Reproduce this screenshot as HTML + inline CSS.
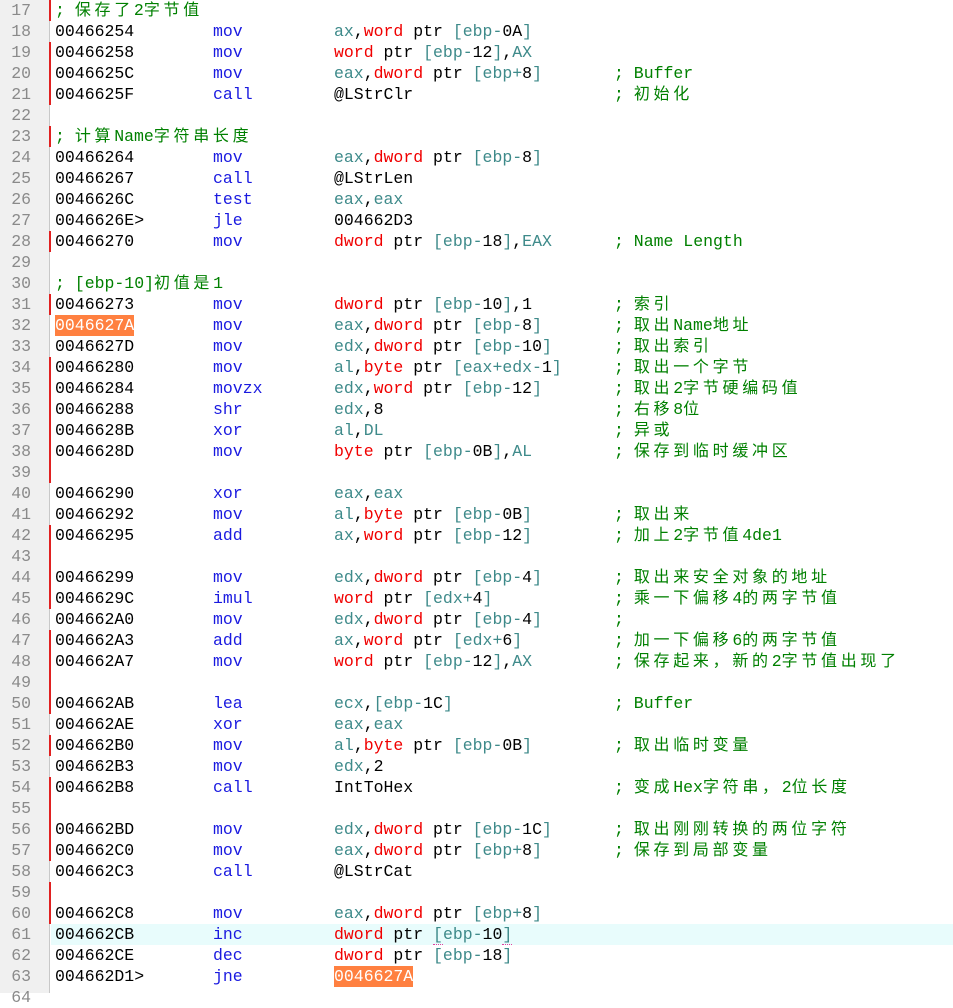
<!DOCTYPE html>
<html><head><meta charset="utf-8"><style>
body{margin:0;width:953px;height:993px;overflow:hidden;background:#fff;position:relative;font-family:"Liberation Mono","Noto Sans CJK SC",monospace;font-size:16.5px;}
#g{position:absolute;left:0;top:0;width:49px;height:993px;background:#f0f0f0;}
#gl{position:absolute;left:49px;top:0;width:1px;height:993px;background:#c8c8c8;}
.l{position:absolute;left:0;height:21px;width:953px;line-height:21px;white-space:pre;color:#000;overflow:hidden;}
.l>span{height:21px;top:0;}
.n{position:absolute;left:0;width:31px;text-align:right;color:#8a8a8a;}
.mk{position:absolute;left:49px;top:0;width:2px;height:21px;background:#e02020;}
.a{position:absolute;left:55px;}
.m{position:absolute;left:213px;color:#1a1ae0;}
.o{position:absolute;left:334px;}
.c{position:absolute;left:614px;color:#008000;}
.cc{position:absolute;left:55px;color:#008000;}
.r{color:#3e8a8a;}
.k{color:#f00000;}
i{font-style:normal;font-family:"Noto Sans CJK SC",sans-serif;font-size:16px;letter-spacing:3.7px;line-height:1;vertical-align:0;}
.hl{background:#ff8040;color:#fff;}
</style></head><body>
<div id="g"></div><div id="gl"></div>

<div class="l" style="top:0px"><span class="n">17</span><span class="mk"></span><span class="cc">; <i>保存了</i>2<i>字节值</i></span></div>
<div class="l" style="top:21px"><span class="n">18</span><span class="a">00466254</span><span class="m">mov</span><span class="o"><span class="r">ax</span>,<span class="k">word</span> ptr <span class="r">[ebp-</span>0A<span class="r">]</span></span></div>
<div class="l" style="top:42px"><span class="n">19</span><span class="mk"></span><span class="a">00466258</span><span class="m">mov</span><span class="o"><span class="k">word</span> ptr <span class="r">[ebp-</span>12<span class="r">]</span>,<span class="r">AX</span></span></div>
<div class="l" style="top:63px"><span class="n">20</span><span class="mk"></span><span class="a">0046625C</span><span class="m">mov</span><span class="o"><span class="r">eax</span>,<span class="k">dword</span> ptr <span class="r">[ebp+</span>8<span class="r">]</span></span><span class="c">; Buffer</span></div>
<div class="l" style="top:84px"><span class="n">21</span><span class="mk"></span><span class="a">0046625F</span><span class="m">call</span><span class="o">@LStrClr</span><span class="c">; <i>初始化</i></span></div>
<div class="l" style="top:105px"><span class="n">22</span></div>
<div class="l" style="top:126px"><span class="n">23</span><span class="mk"></span><span class="cc">; <i>计算</i>Name<i>字符串长度</i></span></div>
<div class="l" style="top:147px"><span class="n">24</span><span class="a">00466264</span><span class="m">mov</span><span class="o"><span class="r">eax</span>,<span class="k">dword</span> ptr <span class="r">[ebp-</span>8<span class="r">]</span></span></div>
<div class="l" style="top:168px"><span class="n">25</span><span class="a">00466267</span><span class="m">call</span><span class="o">@LStrLen</span></div>
<div class="l" style="top:189px"><span class="n">26</span><span class="a">0046626C</span><span class="m">test</span><span class="o"><span class="r">eax</span>,<span class="r">eax</span></span></div>
<div class="l" style="top:210px"><span class="n">27</span><span class="a">0046626E&gt;</span><span class="m">jle</span><span class="o">004662D3</span></div>
<div class="l" style="top:231px"><span class="n">28</span><span class="mk"></span><span class="a">00466270</span><span class="m">mov</span><span class="o"><span class="k">dword</span> ptr <span class="r">[ebp-</span>18<span class="r">]</span>,<span class="r">EAX</span></span><span class="c">; Name Length</span></div>
<div class="l" style="top:252px"><span class="n">29</span></div>
<div class="l" style="top:273px"><span class="n">30</span><span class="cc">; [ebp-10]<i>初值是</i>1</span></div>
<div class="l" style="top:294px"><span class="n">31</span><span class="mk"></span><span class="a">00466273</span><span class="m">mov</span><span class="o"><span class="k">dword</span> ptr <span class="r">[ebp-</span>10<span class="r">]</span>,1</span><span class="c">; <i>索引</i></span></div>
<div class="l" style="top:315px"><span class="n">32</span><span class="a hl">0046627A</span><span class="m">mov</span><span class="o"><span class="r">eax</span>,<span class="k">dword</span> ptr <span class="r">[ebp-</span>8<span class="r">]</span></span><span class="c">; <i>取出</i>Name<i>地址</i></span></div>
<div class="l" style="top:336px"><span class="n">33</span><span class="a">0046627D</span><span class="m">mov</span><span class="o"><span class="r">edx</span>,<span class="k">dword</span> ptr <span class="r">[ebp-</span>10<span class="r">]</span></span><span class="c">; <i>取出索引</i></span></div>
<div class="l" style="top:357px"><span class="n">34</span><span class="mk"></span><span class="a">00466280</span><span class="m">mov</span><span class="o"><span class="r">al</span>,<span class="k">byte</span> ptr <span class="r">[eax+edx-</span>1<span class="r">]</span></span><span class="c">; <i>取出一个字节</i></span></div>
<div class="l" style="top:378px"><span class="n">35</span><span class="mk"></span><span class="a">00466284</span><span class="m">movzx</span><span class="o"><span class="r">edx</span>,<span class="k">word</span> ptr <span class="r">[ebp-</span>12<span class="r">]</span></span><span class="c">; <i>取出</i>2<i>字节硬编码值</i></span></div>
<div class="l" style="top:399px"><span class="n">36</span><span class="mk"></span><span class="a">00466288</span><span class="m">shr</span><span class="o"><span class="r">edx</span>,8</span><span class="c">; <i>右移</i>8<i>位</i></span></div>
<div class="l" style="top:420px"><span class="n">37</span><span class="mk"></span><span class="a">0046628B</span><span class="m">xor</span><span class="o"><span class="r">al</span>,<span class="r">DL</span></span><span class="c">; <i>异或</i></span></div>
<div class="l" style="top:441px"><span class="n">38</span><span class="mk"></span><span class="a">0046628D</span><span class="m">mov</span><span class="o"><span class="k">byte</span> ptr <span class="r">[ebp-</span>0B<span class="r">]</span>,<span class="r">AL</span></span><span class="c">; <i>保存到临时缓冲区</i></span></div>
<div class="l" style="top:462px"><span class="n">39</span><span class="mk"></span></div>
<div class="l" style="top:483px"><span class="n">40</span><span class="a">00466290</span><span class="m">xor</span><span class="o"><span class="r">eax</span>,<span class="r">eax</span></span></div>
<div class="l" style="top:504px"><span class="n">41</span><span class="a">00466292</span><span class="m">mov</span><span class="o"><span class="r">al</span>,<span class="k">byte</span> ptr <span class="r">[ebp-</span>0B<span class="r">]</span></span><span class="c">; <i>取出来</i></span></div>
<div class="l" style="top:525px"><span class="n">42</span><span class="mk"></span><span class="a">00466295</span><span class="m">add</span><span class="o"><span class="r">ax</span>,<span class="k">word</span> ptr <span class="r">[ebp-</span>12<span class="r">]</span></span><span class="c">; <i>加上</i>2<i>字节值</i>4de1</span></div>
<div class="l" style="top:546px"><span class="n">43</span><span class="mk"></span></div>
<div class="l" style="top:567px"><span class="n">44</span><span class="mk"></span><span class="a">00466299</span><span class="m">mov</span><span class="o"><span class="r">edx</span>,<span class="k">dword</span> ptr <span class="r">[ebp-</span>4<span class="r">]</span></span><span class="c">; <i>取出来安全对象的地址</i></span></div>
<div class="l" style="top:588px"><span class="n">45</span><span class="mk"></span><span class="a">0046629C</span><span class="m">imul</span><span class="o"><span class="k">word</span> ptr <span class="r">[edx+</span>4<span class="r">]</span></span><span class="c">; <i>乘一下偏移</i>4<i>的两字节值</i></span></div>
<div class="l" style="top:609px"><span class="n">46</span><span class="a">004662A0</span><span class="m">mov</span><span class="o"><span class="r">edx</span>,<span class="k">dword</span> ptr <span class="r">[ebp-</span>4<span class="r">]</span></span><span class="c">;</span></div>
<div class="l" style="top:630px"><span class="n">47</span><span class="mk"></span><span class="a">004662A3</span><span class="m">add</span><span class="o"><span class="r">ax</span>,<span class="k">word</span> ptr <span class="r">[edx+</span>6<span class="r">]</span></span><span class="c">; <i>加一下偏移</i>6<i>的两字节值</i></span></div>
<div class="l" style="top:651px"><span class="n">48</span><span class="mk"></span><span class="a">004662A7</span><span class="m">mov</span><span class="o"><span class="k">word</span> ptr <span class="r">[ebp-</span>12<span class="r">]</span>,<span class="r">AX</span></span><span class="c">; <i>保存起来，新的</i>2<i>字节值出现了</i></span></div>
<div class="l" style="top:672px"><span class="n">49</span><span class="mk"></span></div>
<div class="l" style="top:693px"><span class="n">50</span><span class="mk"></span><span class="a">004662AB</span><span class="m">lea</span><span class="o"><span class="r">ecx</span>,<span class="r">[ebp-</span>1C<span class="r">]</span></span><span class="c">; Buffer</span></div>
<div class="l" style="top:714px"><span class="n">51</span><span class="a">004662AE</span><span class="m">xor</span><span class="o"><span class="r">eax</span>,<span class="r">eax</span></span></div>
<div class="l" style="top:735px"><span class="n">52</span><span class="mk"></span><span class="a">004662B0</span><span class="m">mov</span><span class="o"><span class="r">al</span>,<span class="k">byte</span> ptr <span class="r">[ebp-</span>0B<span class="r">]</span></span><span class="c">; <i>取出临时变量</i></span></div>
<div class="l" style="top:756px"><span class="n">53</span><span class="a">004662B3</span><span class="m">mov</span><span class="o"><span class="r">edx</span>,2</span></div>
<div class="l" style="top:777px"><span class="n">54</span><span class="mk"></span><span class="a">004662B8</span><span class="m">call</span><span class="o">IntToHex</span><span class="c">; <i>变成</i>Hex<i>字符串，</i>2<i>位长度</i></span></div>
<div class="l" style="top:798px"><span class="n">55</span><span class="mk"></span></div>
<div class="l" style="top:819px"><span class="n">56</span><span class="mk"></span><span class="a">004662BD</span><span class="m">mov</span><span class="o"><span class="r">edx</span>,<span class="k">dword</span> ptr <span class="r">[ebp-</span>1C<span class="r">]</span></span><span class="c">; <i>取出刚刚转换的两位字符</i></span></div>
<div class="l" style="top:840px"><span class="n">57</span><span class="mk"></span><span class="a">004662C0</span><span class="m">mov</span><span class="o"><span class="r">eax</span>,<span class="k">dword</span> ptr <span class="r">[ebp+</span>8<span class="r">]</span></span><span class="c">; <i>保存到局部变量</i></span></div>
<div class="l" style="top:861px"><span class="n">58</span><span class="a">004662C3</span><span class="m">call</span><span class="o">@LStrCat</span></div>
<div class="l" style="top:882px"><span class="n">59</span><span class="mk"></span></div>
<div class="l" style="top:903px"><span class="n">60</span><span class="mk"></span><span class="a">004662C8</span><span class="m">mov</span><span class="o"><span class="r">eax</span>,<span class="k">dword</span> ptr <span class="r">[ebp+</span>8<span class="r">]</span></span></div>
<div class="l" style="top:924px"><span style="position:absolute;left:51px;top:0;width:902px;height:21px;background:#e8fcfc"></span><span class="n">61</span><span class="a">004662CB</span><span class="m">inc</span><span class="o"><span class="k">dword</span> ptr <span class="r" style="border-bottom:1px dotted #e040a0">[</span><span class="r">ebp-</span>10<span class="r" style="border-bottom:1px dotted #e040a0">]</span></span></div>
<div class="l" style="top:945px"><span class="n">62</span><span class="a">004662CE</span><span class="m">dec</span><span class="o"><span class="k">dword</span> ptr <span class="r">[ebp-</span>18<span class="r">]</span></span></div>
<div class="l" style="top:966px"><span class="n">63</span><span class="a">004662D1&gt;</span><span class="m">jne</span><span class="o hl">0046627A</span></div>
<div class="l" style="top:987px"><span class="n">64</span></div>
</body></html>
